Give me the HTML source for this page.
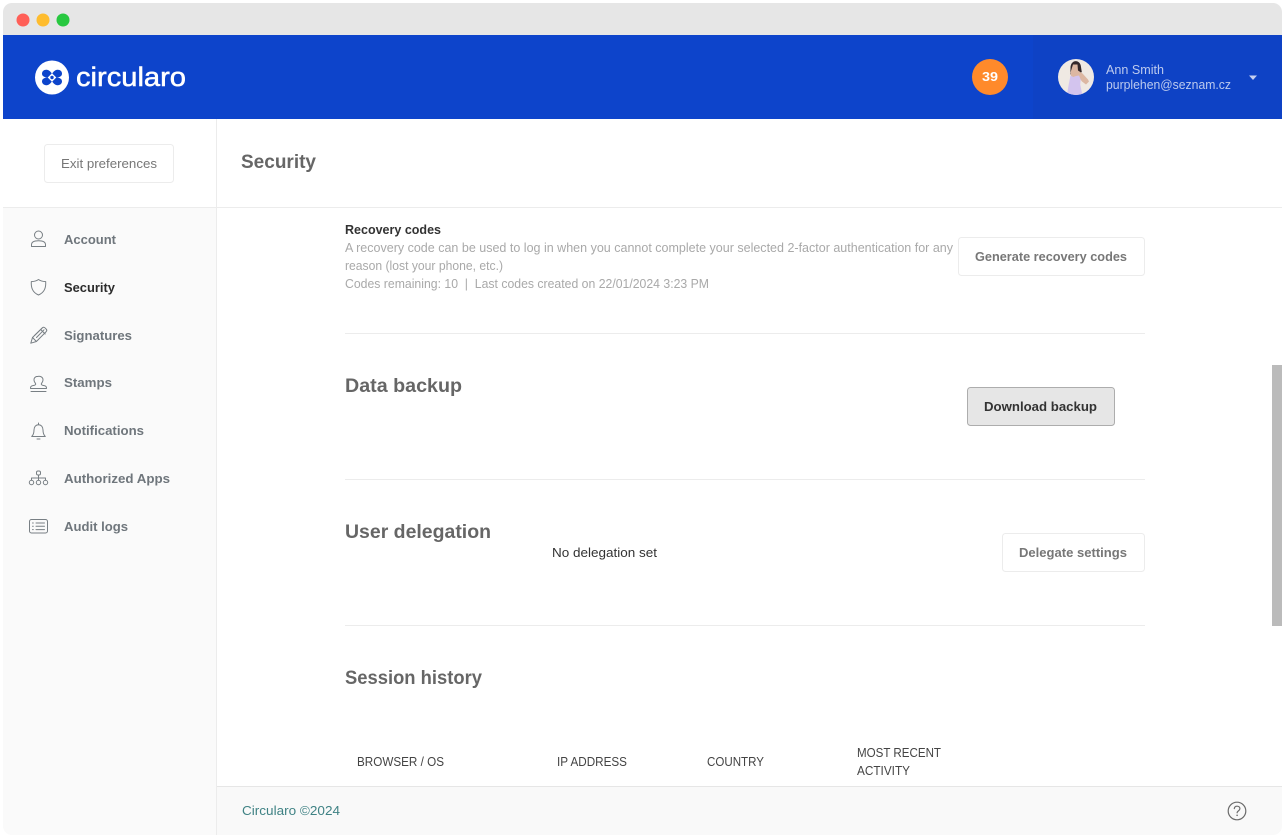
<!DOCTYPE html>
<html lang="en">
<head>
<meta charset="utf-8">
<title>Circularo - Security</title>
<style>
html,body{margin:0;padding:0;background:#fff;width:1285px;height:838px;overflow:hidden}
svg{display:block}
text{font-family:"Liberation Sans",sans-serif;font-size:13px}
.nav{font-weight:700;fill:#6f767c;font-size:13px}
.h{font-weight:700;fill:#666;font-size:19px}
.d{fill:#a9a9a9;font-size:12.5px}
.t{fill:#444;font-size:12.5px}
.b{font-weight:700;fill:#777}
.i{fill:none;stroke:#787f84;stroke-width:1;stroke-linecap:round;stroke-linejoin:round}
</style>
</head>
<body>
<svg width="1285" height="838" viewBox="0 0 1285 838" xmlns="http://www.w3.org/2000/svg">
<defs>
<clipPath id="win"><rect x="3" y="3" width="1279" height="832" rx="9"/></clipPath>
<clipPath id="av"><circle cx="1076" cy="77" r="18"/></clipPath>
</defs>
<g clip-path="url(#win)">
<rect x="3" y="3" width="1279" height="832" fill="#fff"/>
<rect x="3" y="3" width="1279" height="32" fill="#e6e6e6"/>
<rect x="3" y="35" width="1279" height="84" fill="#0d44cb"/>
<rect x="1033" y="35" width="249" height="84" fill="#0e42c5"/>
<rect x="3" y="208" width="213" height="627" fill="#fafafa"/>
<rect x="216" y="119" width="1" height="716" fill="#ececec"/>
<rect x="3" y="207" width="1279" height="1" fill="#ececec"/>
<rect x="217" y="786" width="1065" height="49" fill="#f9f9f9"/>
<rect x="217" y="786" width="1065" height="1" fill="#e6e6e6"/>
<rect x="1272" y="365" width="10" height="261" fill="#bbb"/>
</g>

<circle cx="23" cy="20" r="6.5" fill="#ff5f57"/>
<circle cx="43" cy="20" r="6.5" fill="#febc2e"/>
<circle cx="63" cy="20" r="6.5" fill="#28c840"/>

<!-- logo -->
<circle cx="52" cy="77.5" r="17" fill="#fff"/>
<g fill="#0d44cb">
<path d="M52 73.800c-1.800-2.700-3.600-4-5.800-4-2.400 0-4.200 1.700-4.200 3.800 0 2.300 2 3.900 6.100 3.900z"/>
<path d="M52 73.800c1.800-2.700 3.600-4 5.800-4 2.400 0 4.200 1.700 4.200 3.800 0 2.300-2 3.900-6.100 3.900z"/>
<path d="M52 81.200c-1.800 2.700-3.600 4-5.800 4-2.400 0-4.200-1.700-4.200-3.800 0-2.300 2-3.900 6.100-3.900z"/>
<path d="M52 81.200c1.800 2.700 3.600 4 5.800 4 2.400 0 4.200-1.700 4.200-3.800 0-2.300-2-3.900-6.100-3.900z"/>
</g>
<path d="M52 73.200l4.300 4.300-4.300 4.300-4.300-4.300z" fill="#fff"/>
<circle cx="52" cy="77.5" r="1.700" fill="#0d44cb"/>
<text x="76" y="86" fill="#fff" stroke="#fff" stroke-width=".5" style="font-size:27px" textLength="110" lengthAdjust="spacingAndGlyphs">circularo</text>

<!-- header right -->
<circle cx="990" cy="77" r="18" fill="#ff8a2b"/>
<text x="982" y="81" fill="#fff" style="font-size:13px;font-weight:700" textLength="16" lengthAdjust="spacingAndGlyphs">39</text>
<circle cx="1076" cy="77" r="18" fill="#efe9e3"/>
<g clip-path="url(#av)">
<path d="M1070.500 68c0-9 10-9 10.500-1l.8 5-2.500 1.500-7 0-2 1z" fill="#33282a"/>
<path d="M1073 64.500h4.500l.5 6 3 2 1.500 1 5.500 6 1 2-3 3-4-3-1.500-2h-9l-1-7z" fill="#dcb7a2"/>
<path d="M1070.500 75.500l2.800 1.500 2.700-1 3-.5 1.700 4-.5 5 2.500 12h-16l2-12 1-5z" fill="#d3c4ee"/>
</g>
<text x="1106" y="74" fill="#bccaee" style="font-size:12.5px" textLength="58" lengthAdjust="spacingAndGlyphs">Ann Smith</text>
<text x="1106" y="89" fill="#bccaee" style="font-size:12.5px" textLength="125" lengthAdjust="spacingAndGlyphs">purplehen@seznam.cz</text>
<path d="M1249 75.500h8l-4 4.500z" fill="#c5d0f0"/>

<!-- top bar -->
<rect x="44.500" y="144.500" width="129" height="38" rx="3" fill="#fff" stroke="#ececec"/>
<text x="61" y="168" fill="#777" textLength="96" lengthAdjust="spacingAndGlyphs">Exit preferences</text>
<text x="241" y="168" class="h" textLength="75" lengthAdjust="spacingAndGlyphs">Security</text>

<!-- nav -->
<text x="64" y="244" class="nav" textLength="52" lengthAdjust="spacingAndGlyphs">Account</text>
<text x="64" y="292" class="nav" style="fill:#2c2c2c" textLength="51" lengthAdjust="spacingAndGlyphs">Security</text>
<text x="64" y="340" class="nav" textLength="68" lengthAdjust="spacingAndGlyphs">Signatures</text>
<text x="64" y="387" class="nav" textLength="48" lengthAdjust="spacingAndGlyphs">Stamps</text>
<text x="64" y="435" class="nav" textLength="80" lengthAdjust="spacingAndGlyphs">Notifications</text>
<text x="64" y="483" class="nav" textLength="106" lengthAdjust="spacingAndGlyphs">Authorized Apps</text>
<text x="64" y="531" class="nav" textLength="64" lengthAdjust="spacingAndGlyphs">Audit logs</text>

<!-- account -->
<g class="i">
<circle cx="38.500" cy="235" r="4"/>
<path d="M31.500 246.500v-1.800c0-2.800 3-4 7-4s7 1.200 7 4v1.800z"/>
</g>
<!-- shield -->
<path class="i" d="M38.500 279.500c2 1.400 4.500 2.100 7.200 2.100.3 5.800-.9 10.600-7.200 13.400-6.300-2.800-7.500-7.600-7.200-13.400 2.700 0 5.200-.7 7.200-2.100z"/>
<!-- pencil -->
<g class="i">
<path d="M30.800 343.200l1.700-5.700 9.900-9.700c.8-.7 1.800-.7 2.500 0l1.300 1.300c.7.700.7 1.700 0 2.500l-9.800 9.900z"/>
<path d="M40.700 329.500l4.500 4.500M34.500 335.500l7.700-7.500M36.500 337.500l7.500-7.700M32.500 337.500l3.800 3.900"/>
</g>
<!-- stamp -->
<g class="i">
<path d="M36.500 376.500c-1.700.6-2.500 1.800-2.500 3.300 0 2.500 1.700 3.200 1.700 4.300 0 .9-.7 1.100-2.400 1.400-1.800.3-2.800 1.100-2.800 2.400v.6h16v-.6c0-1.300-1-2.100-2.800-2.400-1.700-.3-2.400-.5-2.400-1.400 0-1.100 1.700-1.800 1.700-4.300 0-1.500-.8-2.700-2.500-3.300-1-.4-2-.4-3 0z"/>
<path d="M31 391.500h15"/>
</g>
<!-- bell -->
<g class="i">
<path d="M31.700 436.500c1.800-1.700 2.300-3.400 2.300-6.500 0-3 1.800-5.300 4.500-5.300s4.500 2.300 4.500 5.300c0 3.100.5 4.800 2.300 6.500z"/>
<path d="M37 439h3M38.500 423v1.700"/>
</g>
<!-- org -->
<g class="i">
<rect x="36.500" y="471" width="4" height="4" rx="1.500"/>
<circle cx="31.500" cy="482.500" r="2.200"/>
<circle cx="38.500" cy="482.500" r="2.200"/>
<circle cx="45.500" cy="482.500" r="2.200"/>
<path d="M38.500 475v5.300M31.500 480.300v-2.300h14v2.300"/>
</g>
<!-- list -->
<g class="i">
<rect x="29.500" y="519.500" width="18" height="13.500" rx="2"/>
<path d="M36 523h8.500M36 526.300h8.500M36 529.600h8.500M32.500 523h.8M32.500 526.300h.8M32.500 529.600h.8"/>
</g>

<!-- recovery -->
<text x="345" y="234" style="fill:#333;font-weight:700;font-size:13px" textLength="96" lengthAdjust="spacingAndGlyphs">Recovery codes</text>
<text x="345" y="252" class="d" textLength="608" lengthAdjust="spacingAndGlyphs">A recovery code can be used to log in when you cannot complete your selected 2-factor authentication for any</text>
<text x="345" y="270" class="d" textLength="158" lengthAdjust="spacingAndGlyphs">reason (lost your phone, etc.)</text>
<text x="345" y="288" class="d" xml:space="preserve" textLength="364" lengthAdjust="spacingAndGlyphs">Codes remaining: 10  |  Last codes created on 22/01/2024 3:23 PM</text>
<rect x="958.500" y="237.500" width="186" height="38" rx="3" fill="#fff" stroke="#ececec"/>
<text x="975" y="261" class="b" textLength="152" lengthAdjust="spacingAndGlyphs">Generate recovery codes</text>

<rect x="345" y="333" width="800" height="1" fill="#ececec"/>
<text x="345" y="392" class="h" textLength="117" lengthAdjust="spacingAndGlyphs">Data backup</text>
<rect x="967.500" y="387.500" width="147" height="38" rx="3" fill="#e6e6e6" stroke="#adadad"/>
<text x="984" y="411" style="font-weight:700;fill:#333" textLength="113" lengthAdjust="spacingAndGlyphs">Download backup</text>

<rect x="345" y="479" width="800" height="1" fill="#ececec"/>
<text x="345" y="538" class="h" textLength="146" lengthAdjust="spacingAndGlyphs">User delegation</text>
<text x="552" y="557" style="fill:#333" textLength="105" lengthAdjust="spacingAndGlyphs">No delegation set</text>
<rect x="1002.500" y="533.500" width="142" height="38" rx="3" fill="#fff" stroke="#ececec"/>
<text x="1019" y="557" class="b" textLength="108" lengthAdjust="spacingAndGlyphs">Delegate settings</text>

<rect x="345" y="625" width="800" height="1" fill="#ececec"/>
<text x="345" y="684" class="h" textLength="137" lengthAdjust="spacingAndGlyphs">Session history</text>

<text x="357" y="766" class="t" textLength="87" lengthAdjust="spacingAndGlyphs">BROWSER / OS</text>
<text x="557" y="766" class="t" textLength="70" lengthAdjust="spacingAndGlyphs">IP ADDRESS</text>
<text x="707" y="766" class="t" textLength="57" lengthAdjust="spacingAndGlyphs">COUNTRY</text>
<text x="857" y="757" class="t" textLength="84" lengthAdjust="spacingAndGlyphs">MOST RECENT</text>
<text x="857" y="775" class="t" textLength="53" lengthAdjust="spacingAndGlyphs">ACTIVITY</text>

<!-- footer -->
<text x="242" y="815" style="fill:#3f8284" textLength="98" lengthAdjust="spacingAndGlyphs">Circularo ©2024</text>
<circle cx="1237" cy="811" r="8.800" fill="none" stroke="#6b6b6b" stroke-width="1.200"/>
<path d="M1234.300 808.600c.2-1.600 1.300-2.400 2.800-2.400 1.600 0 2.800 1 2.800 2.400 0 2.300-2.800 2.200-2.800 4.200" fill="none" stroke="#6b6b6b" stroke-width="1.200" stroke-linecap="round"/>
<circle cx="1237.100" cy="815.300" r=".8" fill="#6b6b6b"/>
</svg>
</body>
</html>
